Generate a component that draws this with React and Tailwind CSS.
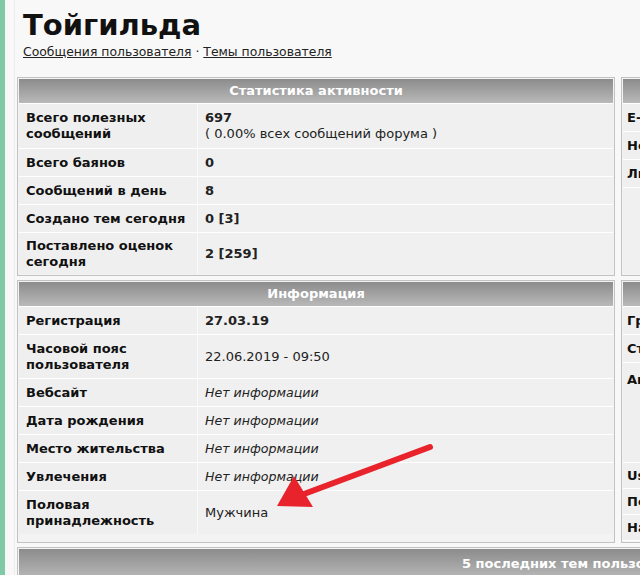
import React from "react";

const FONT = { fontFamily: '"DejaVu Sans", Verdana, sans-serif' };

const stats = [
  { label: ["Всего полезных", "сообщений"], value: <><b>697</b><br />( 0.00% всех сообщений форума )</>, h: "h-[45px]" },
  { label: ["Всего баянов"], value: <b>0</b>, h: "h-[28px]" },
  { label: ["Сообщений в день"], value: <b>8</b>, h: "h-[28px]" },
  { label: ["Создано тем сегодня"], value: <b>0 [3]</b>, h: "h-[28px]" },
  { label: ["Поставлено оценок", "сегодня"], value: <b>2 [259]</b>, h: "h-[42px]" },
];

const noInfo = <i className="text-[12.6px]">Нет информации</i>;

const info = [
  { label: ["Регистрация"], value: <b>27.03.19</b>, h: "h-[28px]" },
  { label: ["Часовой пояс", "пользователя"], value: "22.06.2019 - 09:50", h: "h-[44px]" },
  { label: ["Вебсайт"], value: noInfo, h: "h-[28px]" },
  { label: ["Дата рождения"], value: noInfo, h: "h-[28px]" },
  { label: ["Место жительства"], value: noInfo, h: "h-[28px]" },
  { label: ["Увлечения"], value: noInfo, h: "h-[28px]" },
  { label: ["Половая", "принадлежность"], value: "Мужчина", h: "h-[44px]" },
];

const Header = ({ children, className = "" }) => (
  <div className={`h-[24px] flex items-center bg-gradient-to-b from-[#8c8c8c] to-[#b9b9b9] text-white font-bold text-[13px] ${className}`}>
    {children}
  </div>
);

const Table = ({ title, rows }) => (
  <div className="border border-[#c2c2c2] bg-[#f3f3f3] p-px flex flex-col">
    <Header className="justify-center">{title}</Header>
    {rows.map((r, i) => (
      <div key={i} className={`grid grid-cols-[178px_1fr] border-t border-white ${r.h}`}>
        <div className="bg-[#efefef] px-[7px] flex flex-col justify-center font-bold text-[13px] leading-[16px] text-[#111]">
          {r.label.map((l) => <span key={l}>{l}</span>)}
        </div>
        <div className="bg-[#f0f0f0] border-l border-[#fafafa] px-[7px] flex flex-col justify-center text-[13px] leading-[16px] text-[#222]">
          <div>{r.value}</div>
        </div>
      </div>
    ))}
  </div>
);

const SideTable = ({ rows }) => (
  <div className="border border-[#c2c2c2] bg-[#f3f3f3] p-px flex flex-col">
    <Header />
    {rows.map((r, i) => (
      <div
        key={i}
        className={`border-t border-white bg-[#efefef] px-[4px] flex font-bold text-[13px] text-[#111] ${r.top ? "items-start pt-[7px]" : "items-center"} ${r.h}`}
      >
        {r.t}
      </div>
    ))}
    <div className="flex-1 border-t border-white bg-[#f0f0f0]" />
  </div>
);

export default function App() {
  return (
    <div className="relative w-[640px] h-[575px] overflow-hidden bg-[#f8f8f8] flex" style={FONT}>
      <div className="w-[5px] shrink-0 bg-[#7fc9a7]" />
      <div className="w-[10px] shrink-0 border-r border-[#ececec]" />
      <div className="pl-[2px] shrink-0">
        <h1 className="pl-[6px] pt-[8px] text-[29px] leading-[34px] font-bold text-[#111]">Тойгильда</h1>
        <div className="pl-[6px] pt-[2px] text-[12.4px] leading-[16px] text-[#222]">
          <a className="underline">Сообщения пользователя</a> · <a className="underline">Темы пользователя</a>
        </div>

        <div className="mt-[17px] grid grid-cols-[598px_600px] gap-x-[6px] gap-y-[4px] items-stretch">
          <Table title="Статистика активности" rows={stats} />
          <SideTable
            rows={[
              { t: "E-mail", h: "h-[28px]" },
              { t: "Номер ICQ", h: "h-[28px]" },
              { t: "Личное сообщение", h: "h-[28px]" },
            ]}
          />
          <Table title="Информация" rows={info} />
          <SideTable
            rows={[
              { t: "Группа", h: "h-[28px]" },
              { t: "Статус", h: "h-[28px]" },
              { t: "Аватар", h: "h-[100px]", top: true },
              { t: "User", h: "h-[26px]" },
              { t: "Пол", h: "h-[26px]" },
              { t: "Награды", h: "h-[26px]" },
            ]}
          />
        </div>

        <div className="mt-[4px] w-[1204px] border border-[#c2c2c2] bg-[#f3f3f3] p-px">
          <Header className="pl-[443px] h-[30px]">5 последних тем пользователя</Header>
        </div>
      </div>

      <svg className="absolute left-0 top-0 pointer-events-none" width="640" height="575">
        <line x1="430" y1="447" x2="304" y2="494" stroke="#e8232b" strokeWidth="6" strokeLinecap="round" />
        <polygon points="277,506 294,476 313,507" fill="#e8232b" />
      </svg>
    </div>
  );
}
